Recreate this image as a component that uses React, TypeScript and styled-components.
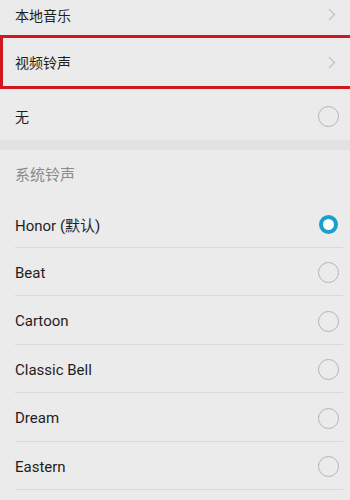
import React from "react";
import styled, { createGlobalStyle } from "styled-components";

const GlobalStyle = createGlobalStyle`
  html, body {
    margin: 0;
    padding: 0;
    background: #ebebeb;
    overflow: hidden;
  }
  body {
    font-family: Roboto, "Noto Sans CJK SC", sans-serif;
  }
`;

const Page = styled.div`
  width: 350px;
  height: 500px;
  background: #ebebeb;
  display: flex;
  flex-direction: column;
  overflow: hidden;
`;

const NavRow = styled.div<{ $highlight?: boolean; $cut?: boolean }>`
  box-sizing: border-box;
  height: ${({ $cut }) => ($cut ? "35px" : "54px")};
  padding: ${({ $cut }) => ($cut ? "0 14px 6px 15px" : "0 14px 0 12px")};
  display: flex;
  align-items: center;
  justify-content: space-between;
  border: ${({ $highlight }) => ($highlight ? "3px solid #d2161e" : "none")};
  margin-right: ${({ $highlight }) => ($highlight ? "-3px" : "0")};
  flex-shrink: 0;
`;

const Label = styled.span<{ $muted?: boolean; $size?: number }>`
  font-size: ${({ $size }) => $size ?? 15}px;
  color: ${({ $muted }) => ($muted ? "#8a8a8a" : "#1e1e1e")};
`;

const Chevron = styled.svg`
  width: 8px;
  height: 13px;
  flex-shrink: 0;
`;

const OptionRow = styled.div<{ $h?: number; $line?: boolean }>`
  box-sizing: border-box;
  height: ${({ $h }) => $h ?? 48.5}px;
  margin-left: 15px;
  margin-right: 7px;
  padding: 3px 4px 0 0;
  display: flex;
  align-items: center;
  justify-content: space-between;
  border-bottom: ${({ $line }) => ($line ? "1px solid #d9d9d9" : "none")};
  flex-shrink: 0;
`;

const SectionGap = styled.div`
  height: 10px;
  background: #e2e2e2;
  flex-shrink: 0;
`;

const Header = styled.div`
  box-sizing: border-box;
  height: 49px;
  padding: 0 15px 2px;
  display: flex;
  align-items: center;
  flex-shrink: 0;
`;

const Radio = styled.span<{ $checked?: boolean }>`
  box-sizing: border-box;
  width: ${({ $checked }) => ($checked ? "19px" : "21px")};
  height: ${({ $checked }) => ($checked ? "19px" : "21px")};
  margin-right: ${({ $checked }) => ($checked ? "1px" : "0")};
  border-radius: 50%;
  border: ${({ $checked }) =>
    $checked ? "4.5px solid #1b9fcb" : "1px solid #b4b4b4"};
  background: ${({ $checked }) => ($checked ? "#ffffff" : "transparent")};
  flex-shrink: 0;
`;

const ChevronIcon = () => (
  <Chevron viewBox="0 0 8 13">
    <path d="M1 1 L6.5 6.5 L1 12" fill="none" stroke="#c2c2c2" strokeWidth="1.3" />
  </Chevron>
);

const tones = ["Honor (默认)", "Beat", "Cartoon", "Classic Bell", "Dream", "Eastern"];

export default function App() {
  return (
    <Page>
      <GlobalStyle />
      <NavRow $cut>
        <Label $size={14}>本地音乐</Label>
        <ChevronIcon />
      </NavRow>
      <NavRow $highlight>
        <Label $size={14}>视频铃声</Label>
        <ChevronIcon />
      </NavRow>
      <OptionRow $h={51}>
        <Label $size={14}>无</Label>
        <Radio />
      </OptionRow>
      <SectionGap />
      <Header>
        <Label $muted>系统铃声</Label>
      </Header>
      {tones.map((t, i) => (
        <OptionRow key={t} $line>
          <Label>{t}</Label>
          <Radio $checked={i === 0} />
        </OptionRow>
      ))}
    </Page>
  );
}
